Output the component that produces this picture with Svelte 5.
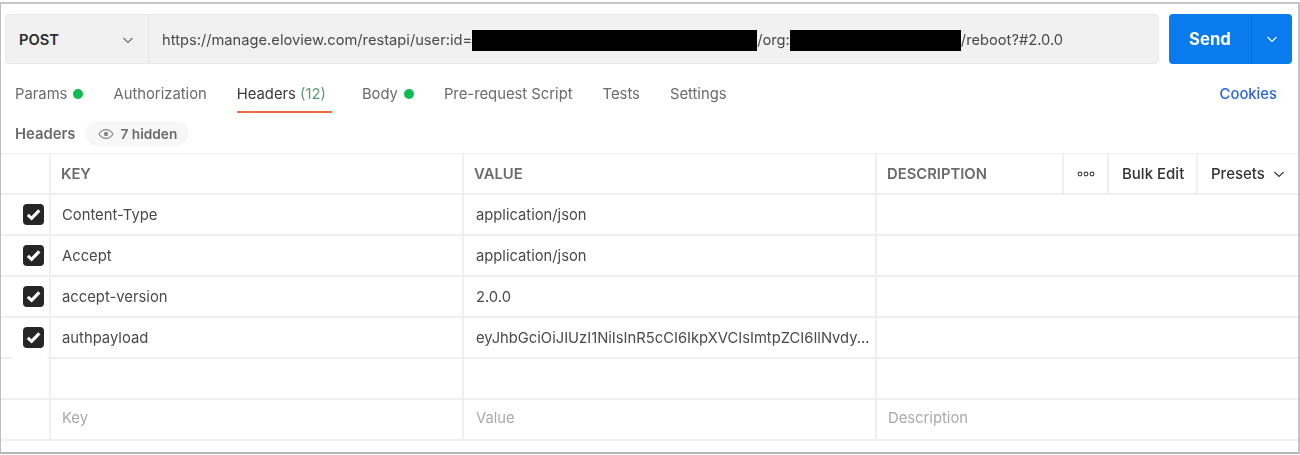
<script>
  const tabs = [
    { label: 'Params', dot: true },
    { label: 'Authorization' },
    { label: 'Headers', count: '(12)', active: true },
    { label: 'Body', dot: true },
    { label: 'Pre-request Script' },
    { label: 'Tests' },
    { label: 'Settings' }
  ];
  const rows = [
    ['Content-Type', 'application/json'],
    ['Accept', 'application/json'],
    ['accept-version', '2.0.0'],
    ['authpayload', 'eyJhbGciOiJIUzI1NiIsInR5cCI6IkpXVCIsImtpZCI6IlNvdy...']
  ];
</script>

<div class="frame">
  <div class="request">
    <div class="urlbox">
      <div class="method">
        <span>POST</span>
        <svg width="12" height="12" viewBox="0 0 12 12"><path d="M1.500 4l4.500 4.500L10.500 4" fill="none" stroke="#6b6b6b" stroke-width="1.100"/></svg>
      </div>
      <div class="url">https://manage.eloview.com/restapi/user:id=<span class="redact r1"></span>/org:<span class="redact r2"></span>/reboot?#2.0.0</div>
    </div>
    <div class="send">
      <span class="sendlabel">Send</span>
      <span class="sendarrow">
        <svg width="12" height="12" viewBox="0 0 12 12"><path d="M1.500 4l4.500 4.500L10.500 4" fill="none" stroke="#fff" stroke-width="1.100"/></svg>
      </span>
    </div>
  </div>

  <div class="tabs">
    {#each tabs as t}
      <div class="tab" class:active={t.active}>
        {t.label}{#if t.count}<span class="count">&nbsp;{t.count}</span>{/if}{#if t.dot}<i class="dot"></i>{/if}
      </div>
    {/each}
    <div class="cookies">Cookies</div>
  </div>

  <div class="subhead">
    <span class="subtitle">Headers</span>
    <span class="hidden">
      <svg width="16" height="12" viewBox="0 0 16 12"><path d="M1 6c1.800-3 4-4.400 7-4.400S13.200 3 15 6c-1.800 3-4 4.400-7 4.400S2.800 9 1 6z" fill="none" stroke="#8a8a8a" stroke-width="1.200"/><circle cx="8" cy="6" r="2.200" fill="#8a8a8a"/></svg>
      7 hidden
    </span>
  </div>

  <div class="table">
    <div class="row head">
      <div class="c check"></div>
      <div class="c key">KEY</div>
      <div class="c val">VALUE</div>
      <div class="c desc">DESCRIPTION</div>
      <div class="c more">
        <svg width="18" height="6" viewBox="0 0 18 6"><g fill="none" stroke="#444" stroke-width="1.100"><circle cx="3" cy="3" r="1.900"/><circle cx="9" cy="3" r="1.900"/><circle cx="15" cy="3" r="1.900"/></g></svg>
      </div>
      <div class="c bulk">Bulk Edit</div>
      <div class="c presets">Presets
        <svg width="12" height="12" viewBox="0 0 12 12"><path d="M1.500 4l4.500 4.500L10.500 4" fill="none" stroke="#333" stroke-width="1.100"/></svg>
      </div>
    </div>
    {#each rows as r, i}
      <div class="row">
        <div class="c check" class:gap={i === 3}>
          <span class="box">
            <svg width="15" height="13" viewBox="0 0 15 13"><path d="M1.800 6.800l3.800 3.500L13.300 2.400" fill="none" stroke="#fff" stroke-width="3.100"/></svg>
          </span>
        </div>
        <div class="c key data">{r[0]}</div>
        <div class="c val data">{r[1]}</div>
        <div class="c wide"></div>
      </div>
    {/each}
    <div class="row">
      <div class="c check"></div>
      <div class="c key"></div>
      <div class="c val"></div>
      <div class="c wide"></div>
    </div>
    <div class="row last">
      <div class="c check"></div>
      <div class="c key data ph"><span>Key</span></div>
      <div class="c val data ph"><span>Value</span></div>
      <div class="c wide data ph"><span>Description</span></div>
    </div>
  </div>
</div>

<style>
  :global(body) {
    margin: 0;
    background: #fff;
  }
  .frame {
    box-sizing: border-box;
    width: 1300px;
    height: 452px;
    margin-top: 2px;
    padding-top: 10px;
    border-top: 2px solid #c6c6c6;
    border-left: 1px solid #bdbdbd;
    border-right: 2px solid #c6c6c6;
    border-bottom: 2px solid #b8b8b8;
    font-family: Inter, "Liberation Sans", sans-serif;
    color: #3a3a3a;
    overflow: hidden;
    filter: blur(0.35px);
  }
  .request {
    display: flex;
    height: 50px;
    padding-left: 4px;
    gap: 10px;
  }
  .urlbox {
    display: flex;
    width: 1154px;
    box-sizing: border-box;
    background: #f1f1f1;
    border: 1px solid #e8e8e8;
    border-radius: 4px;
  }
  .method {
    box-sizing: border-box;
    width: 143px;
    display: flex;
    align-items: center;
    justify-content: space-between;
    padding: 2px 14px 0 13px;
    border-right: 1px solid #e6e6e6;
    font-size: 14.7px;
    font-weight: 600;
    color: #2c2c2c;
  }
  .url {
    display: flex;
    align-items: center;
    padding-left: 13px;
    padding-top: 2px;
    box-sizing: border-box;
    font-size: 14.7px;
    color: #4a4a4a;
    white-space: pre;
  }
  .redact {
    display: block;
    height: 21px;
    background: #000;
  }
  .r1 { width: 285px; }
  .r2 { width: 171px; }
  .send {
    display: flex;
    width: 123px;
    background: #097bed;
    border-radius: 4px;
    color: #fff;
  }
  .sendlabel {
    box-sizing: border-box;
    width: 83px;
    display: flex;
    align-items: center;
    justify-content: center;
    font-size: 16.7px;
    font-weight: 700;
    border-right: 1px solid #0a6fd4;
  }
  .sendarrow {
    flex: 1;
    display: flex;
    align-items: center;
    justify-content: center;
  }
  .tabs {
    display: flex;
    height: 49px;
    margin-left: 14px;
    gap: 30px;
    font-size: 14.8px;
    color: #6b6b6b;
    padding-right: 21px;
    box-sizing: border-box;
  }
  .tab {
    display: flex;
    align-items: center;
    box-sizing: border-box;
    height: 100%;
    padding-top: 12px;
    white-space: pre;
    padding-bottom: 2px;
  }
  .tab.active {
    color: #3a3a3a;
    border-bottom: 2px solid #f26b3a;
    padding-bottom: 0;
    padding-right: 6px;
  }
  .count { color: #5f9a78; }
  .dot {
    width: 10px;
    height: 10px;
    border-radius: 50%;
    background: #0cbb52;
    margin-left: 6px;
  }
  .cookies {
    margin-left: auto;
    align-self: center;
    padding-top: 10px;
    font-weight: 500;
    color: #2c66d8;
  }
  .subhead {
    display: flex;
    align-items: center;
    box-sizing: border-box;
    height: 40px;
    padding-top: 1px;
    margin-left: 14px;
    gap: 10px;
  }
  .subtitle {
    font-size: 14.8px;
    font-weight: 600;
    color: #6b6b6b;
  }
  .hidden {
    display: inline-flex;
    align-items: center;
    gap: 6px;
    height: 25px;
    padding: 0 12px 0 13px;
    border-radius: 13px;
    background: #f7f7f7;
    font-size: 13.7px;
    font-weight: 600;
    color: #6b6b6b;
  }
  .table {
    border-top: 1px solid #ededed;
  }
  .row {
    display: flex;
    height: 41px;
    box-sizing: border-box;
    border-bottom: 2px solid #f0f0f0;
    font-size: 14.8px;
  }
  .c {
    box-sizing: border-box;
    display: flex;
    align-items: center;
    border-right: 2px solid #f0f0f0;
    padding-left: 10px;
    min-width: 0;
    white-space: nowrap;
  }
  .check {
    width: 50px;
    padding-left: 22px;
    position: relative;
  }
  .check.gap::after {
    content: "";
    position: absolute;
    left: 12px;
    bottom: -2px;
    width: 34px;
    height: 2px;
    background: #fff;
  }
  .key { width: 413px; }
  .val { width: 413px; }
  .desc { width: 187px; }
  .more {
    width: 45px;
    padding-left: 13px;
  }
  .bulk {
    width: 89px;
    padding-left: 13px;
    font-size: 15px;
    font-weight: 500;
    color: #333;
  }
  .presets {
    flex: 1;
    border-right: 0;
    padding-left: 13px;
    gap: 8px;
    font-size: 15px;
    font-weight: 500;
    color: #333;
  }
  .wide {
    flex: 1;
    border-right: 0;
  }
  .head .key, .head .val, .head .desc {
    font-weight: 600;
    color: #6b6b6b;
  }
  .data {
    padding-left: 11px;
    color: #4a4a4a;
  }
  .val.data {
    padding-left: 12px;
    font-size: 14.75px;
  }
  .ph { color: #a8a8a8; }
  .ph span { margin-top: -4px; }
  .box {
    display: flex;
    align-items: center;
    justify-content: center;
    width: 21px;
    height: 21px;
    background: #262626;
    border-radius: 4px;
  }
</style>
